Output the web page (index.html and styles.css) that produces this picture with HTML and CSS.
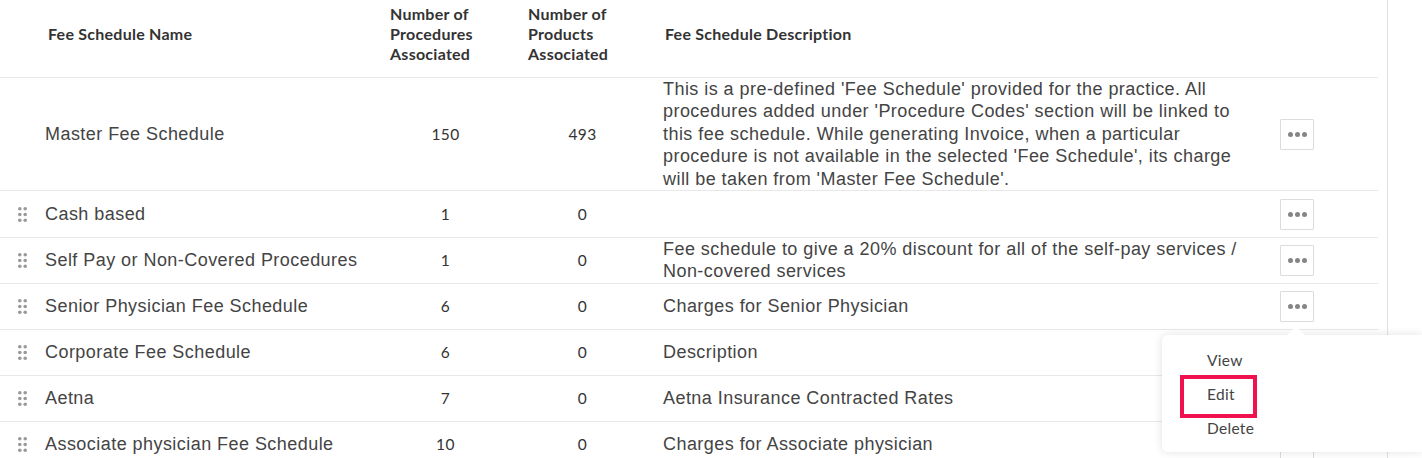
FILE: index.html
```html
<!DOCTYPE html>
<html lang="en">
<head>
<meta charset="utf-8">
<title>Fee Schedules</title>
<link rel="stylesheet" href="styles.css">
</head>
<body>
<div class="page">
  <div class="table">
    <div class="row head">
      <div class="c-grip"></div>
      <div class="c-name">Fee Schedule Name</div>
      <div class="c-proc">Number of Procedures Associated</div>
      <div class="c-prod">Number of Products Associated</div>
      <div class="c-desc">Fee Schedule Description</div>
    </div>
    <div class="row first">
      <div class="c-grip"></div>
      <div class="c-name">Master Fee Schedule</div>
      <div class="c-num1">150</div>
      <div class="c-num2">493</div>
      <div class="c-text">This is a pre-defined 'Fee Schedule' provided for the practice. All procedures added under 'Procedure Codes' section will be linked to this fee schedule. While generating Invoice, when a particular procedure is not available in the selected 'Fee Schedule', its charge will be taken from 'Master Fee Schedule'.</div>
      <div class="c-act"><button class="more"><span></span><span></span><span></span></button></div>
    </div>
    <div class="row second">
      <div class="c-grip"><svg class="grip" viewBox="0 0 9 15"><g><circle cx="1.8" cy="1.8" r="1.8"/><circle cx="7.2" cy="1.8" r="1.8"/><circle cx="1.8" cy="7.5" r="1.8"/><circle cx="7.2" cy="7.5" r="1.8"/><circle cx="1.8" cy="13.2" r="1.8"/><circle cx="7.2" cy="13.2" r="1.8"/></g></svg></div>
      <div class="c-name">Cash based</div>
      <div class="c-num1">1</div>
      <div class="c-num2">0</div>
      <div class="c-text"></div>
      <div class="c-act"><button class="more"><span></span><span></span><span></span></button></div>
    </div>
    <div class="row">
      <div class="c-grip"><svg class="grip" viewBox="0 0 9 15"><g><circle cx="1.8" cy="1.8" r="1.8"/><circle cx="7.2" cy="1.8" r="1.8"/><circle cx="1.8" cy="7.5" r="1.8"/><circle cx="7.2" cy="7.5" r="1.8"/><circle cx="1.8" cy="13.2" r="1.8"/><circle cx="7.2" cy="13.2" r="1.8"/></g></svg></div>
      <div class="c-name">Self Pay or Non-Covered Procedures</div>
      <div class="c-num1">1</div>
      <div class="c-num2">0</div>
      <div class="c-text tight">Fee schedule to give a 20% discount for all of the self-pay services / Non-covered services</div>
      <div class="c-act"><button class="more"><span></span><span></span><span></span></button></div>
    </div>
    <div class="row">
      <div class="c-grip"><svg class="grip" viewBox="0 0 9 15"><g><circle cx="1.8" cy="1.8" r="1.8"/><circle cx="7.2" cy="1.8" r="1.8"/><circle cx="1.8" cy="7.5" r="1.8"/><circle cx="7.2" cy="7.5" r="1.8"/><circle cx="1.8" cy="13.2" r="1.8"/><circle cx="7.2" cy="13.2" r="1.8"/></g></svg></div>
      <div class="c-name">Senior Physician Fee Schedule</div>
      <div class="c-num1">6</div>
      <div class="c-num2">0</div>
      <div class="c-text">Charges for Senior Physician</div>
      <div class="c-act"><button class="more"><span></span><span></span><span></span></button></div>
    </div>
    <div class="row">
      <div class="c-grip"><svg class="grip" viewBox="0 0 9 15"><g><circle cx="1.8" cy="1.8" r="1.8"/><circle cx="7.2" cy="1.8" r="1.8"/><circle cx="1.8" cy="7.5" r="1.8"/><circle cx="7.2" cy="7.5" r="1.8"/><circle cx="1.8" cy="13.2" r="1.8"/><circle cx="7.2" cy="13.2" r="1.8"/></g></svg></div>
      <div class="c-name">Corporate Fee Schedule</div>
      <div class="c-num1">6</div>
      <div class="c-num2">0</div>
      <div class="c-text">Description</div>
      <div class="c-act"><button class="more"><span></span><span></span><span></span></button></div>
    </div>
    <div class="row">
      <div class="c-grip"><svg class="grip" viewBox="0 0 9 15"><g><circle cx="1.8" cy="1.8" r="1.8"/><circle cx="7.2" cy="1.8" r="1.8"/><circle cx="1.8" cy="7.5" r="1.8"/><circle cx="7.2" cy="7.5" r="1.8"/><circle cx="1.8" cy="13.2" r="1.8"/><circle cx="7.2" cy="13.2" r="1.8"/></g></svg></div>
      <div class="c-name">Aetna</div>
      <div class="c-num1">7</div>
      <div class="c-num2">0</div>
      <div class="c-text">Aetna Insurance Contracted Rates</div>
      <div class="c-act"><button class="more"><span></span><span></span><span></span></button></div>
    </div>
    <div class="row">
      <div class="c-grip"><svg class="grip" viewBox="0 0 9 15"><g><circle cx="1.8" cy="1.8" r="1.8"/><circle cx="7.2" cy="1.8" r="1.8"/><circle cx="1.8" cy="7.5" r="1.8"/><circle cx="7.2" cy="7.5" r="1.8"/><circle cx="1.8" cy="13.2" r="1.8"/><circle cx="7.2" cy="13.2" r="1.8"/></g></svg></div>
      <div class="c-name">Associate physician Fee Schedule</div>
      <div class="c-num1">10</div>
      <div class="c-num2">0</div>
      <div class="c-text">Charges for Associate physician</div>
      <div class="c-act"><button class="more"><span></span><span></span><span></span></button></div>
    </div>
  </div>
  <div class="menu">
    <div class="menu-item">View</div>
    <div class="menu-item">Edit</div>
    <div class="menu-item">Delete</div>
    <div class="highlight"></div>
  </div>
</div>
</body>
</html>
```

FILE: styles.css
```css
* { box-sizing: border-box; }
html, body { margin: 0; padding: 0; background: #fff; }
body { width: 1422px; height: 458px; overflow: hidden; }
.page { position: relative; width: 1388px; height: 458px; border-right: 1px solid #e2e2e2; }
.table { width: 1378px; }
.row {
  display: flex; align-items: center; height: 46px;
  border-bottom: 1px solid #e8e8e8;
  font-family: "Liberation Sans", Arial, sans-serif;
  font-size: 18px; color: #444; letter-spacing: 0.45px;
}
.row.first { height: 113px; }
.row.second { height: 47px; }
.row.head {
  height: 78px; padding-bottom: 9px;
  font-family: Lato, sans-serif; font-weight: 700; font-size: 16px;
  line-height: 20px; color: #333; letter-spacing: 0.25px;
}
.c-grip { width: 45px; flex: none; padding-left: 18px; display: flex; }
.c-name { flex: none; width: 345px; }
.head .c-name { width: 345px; padding-left: 3px; }
.head .c-proc { width: 138px; flex: none; padding-right: 40px; }
.head .c-prod { width: 137px; flex: none; padding-right: 40px; }
.head .c-desc { flex: 1; }
.c-num1, .c-num2 {
  flex: none; text-align: center; font-family: Lato, sans-serif;
  font-size: 15.5px; line-height: 20px; letter-spacing: 0.4px; color: #333;
  margin-bottom: 1px;
}
.c-num1 { width: 111px; }
.c-num2 { width: 163px; }
.c-text { flex: none; width: 586px; margin-left: -1px; line-height: 22.5px; }
.c-text.tight { line-height: 22px; margin-bottom: 2px; }
.c-act { flex: none; width: 34px; margin-left: 31px; }
.more {
  display: flex; align-items: center; justify-content: center; gap: 2px;
  width: 34px; height: 31px; padding: 0; background: #fff;
  border: 1px solid #dcdcdc; border-radius: 1px;
}
.more span { width: 5px; height: 5px; border-radius: 50%; background: #858585; }
.grip { width: 9px; height: 15px; fill: #999; }
.menu {
  position: absolute; left: 1162px; top: 335px; width: 260px; height: 117px;
  background: #fff; border-radius: 6px 0 0 6px;
  box-shadow: 0 0 10px rgba(0,0,0,0.12);
  padding: 8px 0 0 45px;
}
.menu::before {
  content: ""; position: absolute; left: 128px; top: -6px; width: 12px; height: 12px;
  background: #fff; transform: rotate(45deg);
}
.menu-item {
  position: relative; height: 34px; line-height: 34px;
  font-family: Lato, sans-serif; font-size: 15.5px; letter-spacing: 0.3px; color: #444;
}
.highlight {
  position: absolute; left: 18px; top: 40px; width: 77px; height: 43px;
  border: 4px solid #f0124f;
}
```
